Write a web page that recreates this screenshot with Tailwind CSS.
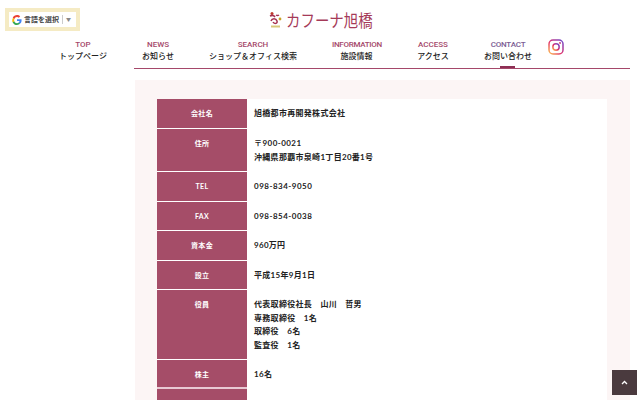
<!DOCTYPE html>
<html lang="ja">
<head>
  <meta charset="UTF-8">
  <title>会社概要</title>
  <script src="https://cdn.jsdelivr.net/npm/@tailwindcss/browser@4"></script>
</head>
<body class="h-[400px] w-[640px] overflow-hidden bg-white font-['Lato','Noto_Sans_CJK_JP',sans-serif] text-[#222]">
  <div class="relative h-[400px] overflow-hidden">
    <!-- language select -->
    <div class="absolute left-[5px] top-[8px] flex h-[23px] w-[75px] items-center border-[4px] border-[#f5ebc4] bg-white pl-[3px]">
      <svg class="h-[10px] w-[10px] shrink-0" viewBox="0 0 24 24">
        <path fill="#4285F4" d="M23 12.300c0-.8-.1-1.600-.2-2.300H12v4.400h6.200c-.3 1.400-1.100 2.600-2.300 3.400v2.800h3.700c2.200-2 3.400-5 3.400-8.300z"/>
        <path fill="#34A853" d="M12 24c3.100 0 5.700-1 7.600-2.800l-3.700-2.800c-1 .7-2.300 1.100-3.900 1.100-3 0-5.500-2-6.400-4.700H1.800v2.900C3.700 21.500 7.600 24 12 24z"/>
        <path fill="#FBBC05" d="M5.600 14.800c-.5-1.400-.5-3 0-4.400V7.500H1.800c-1.600 3.100-1.600 6.800 0 10l3.800-2.700z"/>
        <path fill="#EA4335" d="M12 4.800c1.700 0 3.200.6 4.400 1.700l3.300-3.300C17.700 1.200 15.100 0 12 0 7.600 0 3.700 2.500 1.800 6.400l3.800 2.900C6.500 6.800 9 4.800 12 4.800z"/>
      </svg>
      <span class="ml-[2px] whitespace-nowrap text-[7px] leading-none font-bold text-[#444]">言語を選択</span>
      <span class="ml-[3px] h-[9px] w-px shrink-0 bg-[#ccc]"></span>
      <span class="ml-[3px] text-[5px] text-[#888]">▼</span>
    </div>

    <!-- logo -->
    <div class="flex h-[36px] items-start pl-[269px] pt-[12px]">
      <svg class="h-[16px] w-[14px] shrink-0" viewBox="0 0 14 16" fill="none">
        <circle cx="3" cy="1.500" r="1.500" fill="#c0392b"/>
        <path d="M1 4c2-1 4-.5 5 1M7 3c1 .8 2 .8 3 0M2 9c1-3 5-3 6 0s-3 3-4 1" stroke="#a5304f" stroke-width="1.500"/>
        <circle cx="11" cy="7" r="1.400" fill="#c9a227"/>
        <path d="M2 14.500h9" stroke="#d8c77a" stroke-width="2"/>
      </svg>
      <span class="ml-[3px] origin-left scale-x-[.85] whitespace-nowrap text-[17px] leading-[17px] font-normal text-[#a53a58]">カフーナ旭橋</span>
    </div>

    <!-- nav -->
    <nav class="relative h-[33px]">
      <span class="absolute bottom-0 left-[134px] right-[10px] h-px bg-[#a5486a]"></span>
      <ul class="flex whitespace-nowrap pl-[59px] pt-[3px] font-['Roboto','Noto_Sans_CJK_JP',sans-serif] text-[8px] leading-[12px] font-medium">
        <li class="w-[48px] text-center">
          <p class="text-[#a5486a]">TOP</p>
          <p>トップページ</p>
        </li>
        <li class="ml-[35px] w-[32px] text-center">
          <p class="text-[#a5486a]">NEWS</p>
          <p>お知らせ</p>
        </li>
        <li class="ml-[35px] w-[88px] text-center">
          <p class="text-[#a5486a]">SEARCH</p>
          <p>ショップ＆オフィス検索</p>
        </li>
        <li class="ml-[35px] w-[49px] text-center">
          <p class="tracking-[-0.300px] text-[#a5486a]">INFORMATION</p>
          <p>施設情報</p>
        </li>
        <li class="ml-[36px] w-[32px] text-center">
          <p class="text-[#a5486a]">ACCESS</p>
          <p>アクセス</p>
        </li>
        <li class="relative ml-[35px] w-[48px] text-center">
          <p class="tracking-[-0.200px] text-[#7b5c93]">CONTACT</p>
          <p>お問い合わせ</p>
          <span class="absolute left-[16px] top-[27px] h-[2px] w-[15px] bg-[#8e2f55]"></span>
        </li>
        <li class="ml-[16px]">
          <svg class="h-[16px] w-[16px]" viewBox="0 0 16 16" fill="none">
            <defs>
              <linearGradient id="ig" x1="0" y1="1" x2="1" y2="0">
                <stop offset="0" stop-color="#fdc04f"/>
                <stop offset=".45" stop-color="#e1306c"/>
                <stop offset="1" stop-color="#6a4bd0"/>
              </linearGradient>
            </defs>
            <rect x="1" y="1" width="14" height="14" rx="4" stroke="url(#ig)" stroke-width="1.500"/>
            <circle cx="8" cy="8" r="3.200" stroke="url(#ig)" stroke-width="1.500"/>
            <circle cx="12" cy="4" r="1" fill="url(#ig)"/>
          </svg>
        </li>
      </ul>
    </nav>

    <!-- content -->
    <main class="ml-[135px] mr-[10px] mt-[11px] h-[330px] bg-[#fcf5f5] pl-[22px] pr-[23px] pt-[19px]">
      <div class="bg-white text-[8px] leading-[18px] font-bold tracking-[0.300px] text-[#222]">
        <div class="flex h-[30px] border-b border-white">
          <div class="w-[90px] bg-[#a54d68] pt-[5px] text-center text-[7px] text-white">会社名</div>
          <div class="pl-[7px] pt-[5px]">旭橋都市再開発株式会社</div>
        </div>
        <div class="flex h-[43px] border-b border-white">
          <div class="w-[90px] bg-[#a54d68] pt-[5px] text-center text-[7px] text-white">住所</div>
          <div class="pl-[7px] pt-[7px] leading-[14px]">
            <p class="tracking-[0.450px]">〒900-0021</p>
            <p>沖縄県那覇市泉崎1丁目20番1号</p>
          </div>
        </div>
        <div class="flex h-[30px] border-b border-white">
          <div class="w-[90px] bg-[#a54d68] pt-[5px] text-center text-[7px] text-white">TEL</div>
          <div class="pl-[7px] pt-[5px] tracking-[0.500px]">098-834-9050</div>
        </div>
        <div class="flex h-[29px] border-b border-white">
          <div class="w-[90px] bg-[#a54d68] pt-[5px] text-center text-[7px] text-white">FAX</div>
          <div class="pl-[7px] pt-[5px] tracking-[0.500px]">098-854-0038</div>
        </div>
        <div class="flex h-[30px] border-b border-white">
          <div class="w-[90px] bg-[#a54d68] pt-[5px] text-center text-[7px] text-white">資本金</div>
          <div class="pl-[7px] pt-[5px]">960万円</div>
        </div>
        <div class="flex h-[29px] border-b border-white">
          <div class="w-[90px] bg-[#a54d68] pt-[5px] text-center text-[7px] text-white">設立</div>
          <div class="pl-[7px] pt-[5px]">平成15年9月1日</div>
        </div>
        <div class="flex h-[70px] border-b border-white">
          <div class="w-[90px] bg-[#a54d68] pt-[5px] text-center text-[7px] text-white">役員</div>
          <div class="pl-[7px] pt-[8px] leading-[13.500px]">
            <p>代表取締役社長　山川　哲男</p>
            <p>専務取締役　1名</p>
            <p>取締役　6名</p>
            <p>監査役　1名</p>
          </div>
        </div>
        <div class="flex h-[29px]">
          <div class="w-[90px] border-b-2 border-[#e8c9d3] bg-[#a54d68] pt-[5px] text-center text-[7px] text-white">株主</div>
          <div class="pl-[7px] pt-[5px]">16名</div>
        </div>
        <div class="h-[20px] w-[90px] bg-[#a54d68]"></div>
      </div>
    </main>

    <!-- page top -->
    <a class="absolute left-[612px] top-[370px] flex h-[25px] w-[25px] items-center justify-center bg-[#4a3a3e]">
      <svg class="h-[5px] w-[7px]" viewBox="0 0 7 5" fill="none"><path d="M1 4l2.500-2.500L6 4" stroke="#fff" stroke-width="1.300"/></svg>
    </a>
  </div>
</body>
</html>
